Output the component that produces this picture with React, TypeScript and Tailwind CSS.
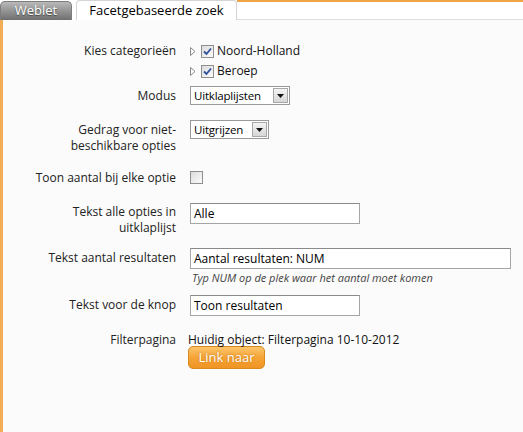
import React from "react";

const font = { fontFamily: '"Open Sans", "Noto Sans", sans-serif' };

function Check({ checked }: { checked?: boolean }) {
  return (
    <span className="inline-flex h-[13px] w-[13px] shrink-0 items-center justify-center border border-[#8f8f8f] bg-gradient-to-br from-[#dcdcdc] to-[#fbfbfb]">
      {checked && (
        <svg width="9" height="9" viewBox="0 0 9 9">
          <path d="M1 4.5 L3.5 7 L8 1.5" fill="none" stroke="#2d4f9c" strokeWidth="1.8" />
        </svg>
      )}
    </span>
  );
}

function Select({ value, width }: { value: string; width: string }) {
  return (
    <div className={`flex h-[19px] items-center border border-[#9a9a9a] bg-white ${width}`}>
      <span className="flex-1 overflow-hidden whitespace-nowrap pl-[3px] text-[11.5px] leading-[17px] tracking-[-0.2px] text-black">{value}</span>
      <span className="mr-[1px] flex h-[15px] w-[15px] shrink-0 items-center justify-center border border-[#a8a8a8] bg-gradient-to-b from-[#f4f4f4] to-[#d6d6d6]">
        <svg width="7" height="4" viewBox="0 0 7 4">
          <path d="M0 0 H7 L3.5 4 Z" fill="#111" />
        </svg>
      </span>
    </div>
  );
}

function TextInput({ value, width }: { value: string; width: string }) {
  return (
    <div className={`flex h-[21px] items-center border border-[#a5a5a5] border-t-[#8a8a8a] bg-white pl-[3px] text-[12px] text-black ${width}`}>
      {value}
    </div>
  );
}

function Row({ label, children, className = "", center = false, labelPad = "" }: { label: React.ReactNode; children: React.ReactNode; className?: string; center?: boolean; labelPad?: string }) {
  return (
    <div className={`-ml-[3px] flex ${center ? "items-center" : "items-start"} ${className}`}>
      <div className={`w-[176px] shrink-0 whitespace-nowrap text-right text-[12px] leading-[16px] text-[#222] ${labelPad}`}>{label}</div>
      <div className="ml-[14px]">{children}</div>
    </div>
  );
}

function TreeItem({ text }: { text: string }) {
  return (
    <div className="flex h-[20px] items-center">
      <svg width="6" height="9" viewBox="0 0 6 9" className="mr-[5px]">
        <path d="M0.5 0.5 L5 4.5 L0.5 8.5 Z" fill="#fff" stroke="#8a8a8a" />
      </svg>
      <Check checked />
      <span className="ml-[3px] text-[12px] text-[#111]">{text}</span>
    </div>
  );
}

export default function App() {
  return (
    <div className="flex h-[432px] w-[523px] flex-col bg-white" style={font}>
      <div className="flex h-[20px] items-end">
        <div className="flex h-[19px] w-[72px] items-center justify-center rounded-t-[5px] border border-b-0 border-[#7d7d7d] bg-gradient-to-b from-[#b9b9b9] to-[#6f6f6f] text-[13px] text-white [text-shadow:0_1px_1px_#444]">
          Weblet
        </div>
        <div className="ml-[4px] flex h-[20px] w-[161px] items-center justify-center rounded-t-[4px] border border-b-0 border-[#d4d4d4] bg-white text-[13px] text-black">
          Facetgebaseerde zoek
        </div>
        <div className="flex h-[20px] flex-1 flex-col">
          <div className="h-[2px] bg-[#eea447]" />
          <div className="flex-1" />
          <div className="h-[1px] bg-[#dedede]" />
        </div>
      </div>
      <div className="flex flex-1 border-l-[3px] border-[#f3ad55] bg-[#fbfbfb]">
        <div className="flex w-full flex-col pt-[23px]">
          <Row label="Kies categorieën">
            <div className="-mt-[2px]">
              <TreeItem text="Noord-Holland" />
              <TreeItem text="Beroep" />
            </div>
          </Row>
          <Row label="Modus" center className="mt-[5px]">
            <Select value="Uitklaplijsten" width="w-[100px]" />
          </Row>
          <Row label={<>Gedrag voor niet-<br />beschikbare opties</>} labelPad="pt-[2px]" className="mt-[15px]">
            <Select value="Uitgrijzen" width="w-[79px]" />
          </Row>
          <Row label="Toon aantal bij elke optie" center className="mt-[11px]">
            <div className="pt-[1px]">
              <Check />
            </div>
          </Row>
          <Row label={<>Tekst alle opties in<br />uitklaplijst</>} labelPad="pt-[1px]" className="mt-[13px]">
            <TextInput value="Alle" width="w-[170px]" />
          </Row>
          <Row label="Tekst aantal resultaten" className="mt-[14px]">
            <div className="-mt-[2px]">
              <TextInput value="Aantal resultaten: NUM" width="w-[321px]" />
              <div className="mt-[1px] pl-[2px] text-[11px] italic leading-[16px] text-[#444]">
                Typ NUM op de plek waar het aantal moet komen
              </div>
            </div>
          </Row>
          <Row label="Tekst voor de knop" className="mt-[11px]">
            <div className="-mt-[2px]">
              <TextInput value="Toon resultaten" width="w-[170px]" />
            </div>
          </Row>
          <Row label="Filterpagina" className="mt-[16px]">
            <div className="-ml-[2px]">
              <div className="text-[12px] leading-[16px] text-[#111]">Huidig object: Filterpagina 10-10-2012</div>
              <button className="-mt-[2px] flex h-[23px] w-[77px] items-center justify-center rounded-[5px] border border-[#d98a1e] bg-gradient-to-b from-[#fbc56a] via-[#f5a436] to-[#ee9424] text-[13px] text-white [text-shadow:0_0_2px_#c07010]">
                Link naar
              </button>
            </div>
          </Row>
        </div>
      </div>
    </div>
  );
}
